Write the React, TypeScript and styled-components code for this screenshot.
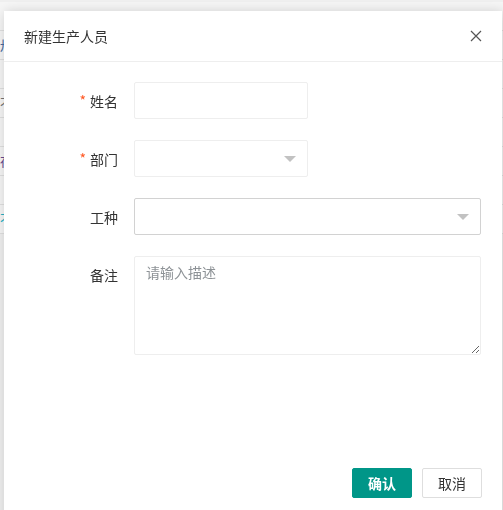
import React from 'react';
import styled, { createGlobalStyle } from 'styled-components';

const GlobalStyle = createGlobalStyle`
  html, body {
    margin: 0;
    padding: 0;
    background: #f4f4f4;
    overflow: hidden;
  }
  body {
    font-family: "Noto Sans CJK SC", "Noto Sans", "Liberation Sans", sans-serif;
    font-size: 14px;
    color: #333;
  }
  * { box-sizing: border-box; }
`;

const Page = styled.div`
  height: 510px;
  padding-top: 2px;
  background: #f4f4f4;
`;

const TableRow = styled.div<{ $tone?: string }>`
  height: 29px;
  border-bottom: 1px solid #e4e4e4;
  background: #fafafa;
  font-size: 13px;
  line-height: 28px;
  color: ${(p) => p.$tone || '#666'};
  white-space: nowrap;
  overflow: hidden;
`;

const Shade = styled.div`
  position: fixed;
  inset: 0;
  background: rgba(0, 0, 0, 0.02);
`;

const Modal = styled.div`
  position: fixed;
  left: 4px;
  top: 11px;
  width: 498px;
  height: 520px;
  background: #fff;
  box-shadow: 1px 1px 12px rgba(0, 0, 0, 0.18);
  display: flex;
  flex-direction: column;
`;

const Header = styled.div`
  height: 51px;
  flex-shrink: 0;
  display: flex;
  align-items: center;
  justify-content: space-between;
  padding: 0 18px 0 20px;
  border-bottom: 1px solid #eee;
  font-size: 14px;
  color: #333;
`;

const CloseButton = styled.button`
  width: 16px;
  height: 16px;
  padding: 0;
  border: none;
  background: transparent;
  display: flex;
  align-items: center;
  justify-content: center;
  cursor: pointer;
`;

const Body = styled.div`
  height: 394px;
  padding: 20px 20px 0 0;
  display: flex;
  flex-direction: column;
  gap: 21px;
`;

const Row = styled.div`
  display: flex;
  align-items: flex-start;
`;

const Label = styled.label`
  width: 130px;
  flex-shrink: 0;
  padding: 9px 16px 0 0;
  line-height: 20px;
  text-align: right;
  color: #333;
`;

const Star = styled.span`
  color: #ff5722;
  margin-right: 4px;
  position: relative;
  top: -1px;
`;

const Input = styled.input<{ $wide?: boolean }>`
  width: ${(p) => (p.$wide ? '347px' : '174px')};
  height: 37px;
  border: 1px solid #eee;
  border-radius: 2px;
  padding: 0 10px;
  font: inherit;
  outline: none;
`;

const Select = styled.div<{ $wide?: boolean; $active?: boolean }>`
  width: ${(p) => (p.$wide ? '347px' : '174px')};
  height: 37px;
  border: 1px solid ${(p) => (p.$active ? '#d2d2d2' : '#eee')};
  border-radius: 2px;
  display: flex;
  align-items: center;
  justify-content: flex-end;
  padding-right: 11px;
`;

const Caret = styled.span`
  width: 0;
  height: 0;
  border-left: 6px solid transparent;
  border-right: 6px solid transparent;
  border-top: 6px solid #c2c2c2;
`;

const TextArea = styled.textarea`
  width: 347px;
  height: 99px;
  border: 1px solid #eee;
  border-radius: 2px;
  padding: 5px 11px;
  font: inherit;
  line-height: 20px;
  color: #333;
  outline: none;
  resize: vertical;

  &::placeholder {
    color: #8d9296;
  }
`;

const Footer = styled.div`
  display: flex;
  justify-content: flex-end;
  gap: 10px;
  padding: 12px 20px;
`;

const Button = styled.button<{ $primary?: boolean }>`
  width: 60px;
  height: 30px;
  border-radius: 2px;
  font-family: inherit;
  font-size: 14px;
  font-weight: ${(p) => (p.$primary ? 700 : 400)};
  border: 1px solid ${(p) => (p.$primary ? '#009688' : '#dedede')};
  background: ${(p) => (p.$primary ? '#009688' : '#fff')};
  color: ${(p) => (p.$primary ? '#fff' : '#333')};
  cursor: pointer;
`;

const rows: { text: string; tone?: string }[] = [
  { text: '' },
  { text: '卅', tone: '#4a6fa5' },
  { text: '' },
  { text: '不', tone: '#777' },
  { text: '' },
  { text: '存', tone: '#6a4c93' },
  { text: '' },
  { text: '不', tone: '#28b5c8' },
];

export default function App() {
  return (
    <>
      <GlobalStyle />
      <Page>
        {rows.map((r, i) => (
          <TableRow key={i} $tone={r.tone}>
            {r.text}
          </TableRow>
        ))}
      </Page>
      <Shade />
      <Modal>
        <Header>
          <span>新建生产人员</span>
          <CloseButton aria-label="关闭">
            <svg width="12" height="12" viewBox="0 0 12 12">
              <path d="M1 1L11 11M11 1L1 11" stroke="#555" strokeWidth="1.2" fill="none" />
            </svg>
          </CloseButton>
        </Header>
        <Body>
          <Row>
            <Label>
              <Star>*</Star>姓名
            </Label>
            <Input />
          </Row>
          <Row>
            <Label>
              <Star>*</Star>部门
            </Label>
            <Select>
              <Caret />
            </Select>
          </Row>
          <Row>
            <Label>工种</Label>
            <Select $wide $active>
              <Caret />
            </Select>
          </Row>
          <Row>
            <Label>备注</Label>
            <TextArea placeholder="请输入描述" />
          </Row>
        </Body>
        <Footer>
          <Button $primary>确认</Button>
          <Button>取消</Button>
        </Footer>
      </Modal>
    </>
  );
}
